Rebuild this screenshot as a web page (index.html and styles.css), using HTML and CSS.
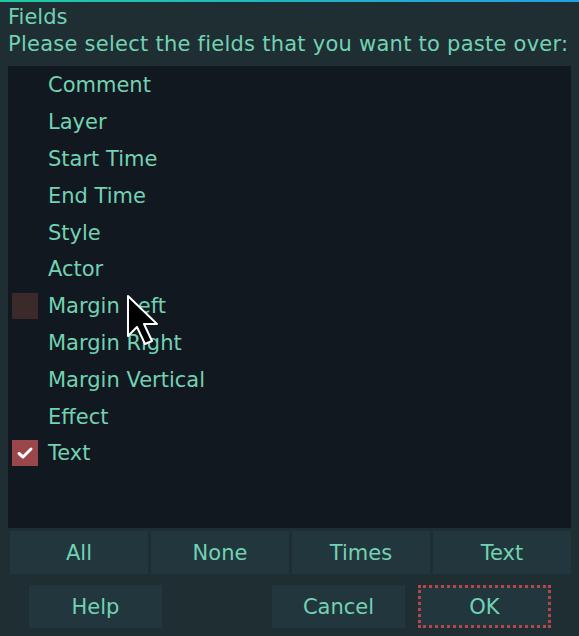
FILE: index.html
```html
<!DOCTYPE html>
<html lang="en">
<head>
  <meta charset="UTF-8">
  <title>Fields</title>
  <link rel="stylesheet" href="styles.css">
</head>
<body>
  <div class="dialog">
    <div class="title">Fields</div>
    <div class="prompt">Please select the fields that you want to paste over:</div>

    <ul class="field-list">
      <li><span class="check"></span>Comment</li>
      <li><span class="check"></span>Layer</li>
      <li><span class="check"></span>Start Time</li>
      <li><span class="check"></span>End Time</li>
      <li><span class="check"></span>Style</li>
      <li><span class="check"></span>Actor</li>
      <li class="hover"><span class="check"></span>Margin Left</li>
      <li><span class="check"></span>Margin Right</li>
      <li><span class="check"></span>Margin Vertical</li>
      <li><span class="check"></span>Effect</li>
      <li class="checked">
        <span class="check">
          <svg viewBox="0 0 26 26" width="26" height="26"><path d="M7 13.5 L11 17 L19 9" fill="none" stroke="#fff" stroke-width="3" stroke-linecap="round" stroke-linejoin="round"/></svg>
        </span>Text
      </li>
    </ul>

    <div class="select-row">
      <button>All</button>
      <button>None</button>
      <button>Times</button>
      <button>Text</button>
    </div>

    <div class="footer">
      <button class="help">Help</button>
      <span class="spacer"></span>
      <button>Cancel</button>
      <button class="focused">OK</button>
    </div>
  </div>

  <!-- mouse pointer over the list -->
  <svg class="pointer" viewBox="0 0 34 54" width="34" height="54">
    <path d="M2 2 L2 42 L11 33 L19 50 L26 47 L18 30 L31 30 Z" fill="#000" stroke="#fff" stroke-width="2" stroke-linejoin="round"/>
  </svg>
</body>
</html>
```

FILE: styles.css
```css
body {
  margin: 0;
  background-color: #1e2e33;
  font-family: "DejaVu Sans", Verdana, sans-serif;
  color: #72d2b2;
  width: 579px;
  height: 636px;
  overflow: hidden;
  position: relative;
}

.dialog {
  border-image: linear-gradient(to right, #1fcaa0, #1ea2e6) 1;
  border-width: 2px 0 0 0;
  border-style: solid;
  padding: 0 8px;
  height: 634px;
}

.title, .prompt {
  font-size: 21px;
  line-height: 27px;
  white-space: nowrap;
}

.title {
  margin-top: 2px;
}

.prompt {
  letter-spacing: 0.25px;
}

.field-list {
  list-style: none;
  margin: 8px 0 0;
  padding: 1px 0 0;
  background-color: #111820;
  height: 461px;
}

.field-list li {
  display: flex;
  align-items: center;
  height: 36.8px;
  font-size: 21px;
  padding-left: 4px;
}

.check {
  width: 26px;
  height: 26px;
  margin-right: 10px;
  display: flex;
}

.hover .check {
  background-color: #3c2a2b;
}

.checked .check {
  background-color: #9a474c;
}

button {
  font-family: inherit;
  font-size: 21px;
  color: #72d2b2;
  background-color: #22363d;
  border: none;
  height: 43px;
  padding: 0;
}

.select-row {
  display: grid;
  grid-template-columns: repeat(4, 1fr);
  gap: 3px;
  margin: 3px 0 0 2px;
  width: 561px;
}

.footer {
  display: flex;
  margin-top: 11px;
  padding-left: 21px;
}

.footer button {
  width: 133px;
}

.spacer {
  width: 110px;
}

.footer .focused {
  margin-left: 13px;
  outline: 3px dotted #b8454a;
  outline-offset: -3px;
}

.pointer {
  position: absolute;
  left: 126px;
  top: 294px;
}
```
